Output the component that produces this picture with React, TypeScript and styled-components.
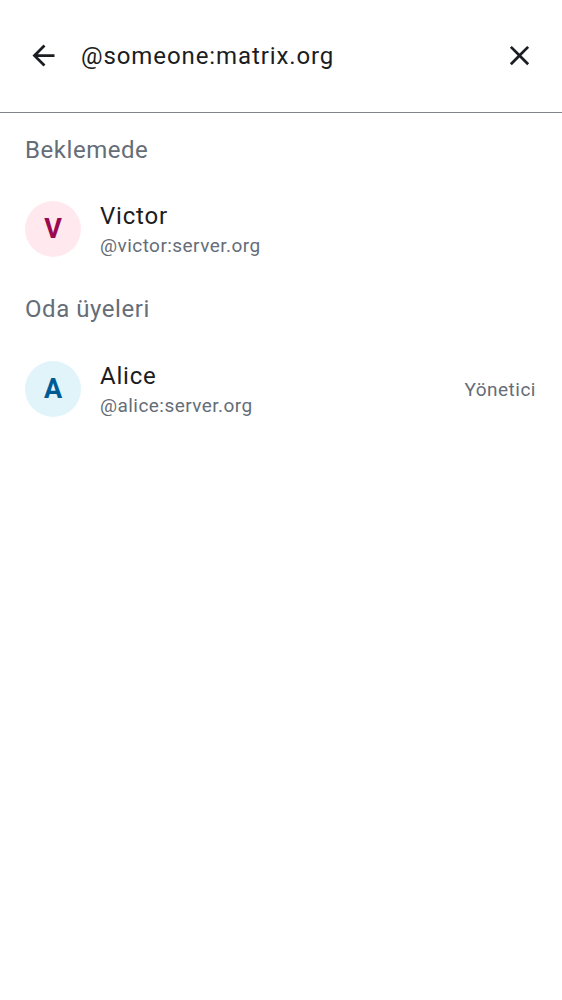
import React from "react";
import styled, { createGlobalStyle } from "styled-components";

const Global = createGlobalStyle`
  html, body { margin: 0; padding: 0; background: #ffffff; }
  body { font-family: Roboto, "Noto Sans", sans-serif; -webkit-font-smoothing: antialiased; }
  * { box-sizing: border-box; }
`;

const Page = styled.div`
  width: 562px;
  min-height: 1000px;
  background: #ffffff;
  display: flex;
  flex-direction: column;
`;

const SearchBar = styled.header`
  height: 113px;
  display: flex;
  align-items: center;
  padding: 0 21px 1px 21px;
  border-bottom: 1px solid #80848a;
`;

const IconButton = styled.button`
  width: 44px;
  height: 44px;
  border: none;
  background: transparent;
  padding: 0;
  display: flex;
  align-items: center;
  justify-content: center;
  color: #1b1d22;
  flex: none;
`;

const Query = styled.div`
  flex: 1;
  margin-left: 16px;
  font-size: 24px;
  color: #1b1d22;
  letter-spacing: 0.9px;
`;

const SectionTitle = styled.div<{ $first?: boolean }>`
  height: ${(p) => (p.$first ? "76px" : "80px")};
  display: flex;
  align-items: center;
  padding: ${(p) => (p.$first ? "0 25px 3px 25px" : "0 25px")};
  font-size: 24px;
  color: #656d77;
  letter-spacing: 0.55px;
`;

const Row = styled.div`
  height: 80px;
  display: flex;
  align-items: center;
  padding: 0 26px 0 25px;
`;

const Avatar = styled.div<{ $bg: string; $fg: string }>`
  width: 56px;
  height: 56px;
  border-radius: 50%;
  background: ${(p) => p.$bg};
  color: ${(p) => p.$fg};
  display: flex;
  align-items: center;
  justify-content: center;
  font-weight: 700;
  font-size: 27px;
  flex: none;
`;

const Texts = styled.div`
  flex: 1;
  margin-left: 19px;
  display: flex;
  flex-direction: column;
`;

const Name = styled.div`
  font-size: 24px;
  line-height: 34px;
  color: #1b1d22;
  letter-spacing: 0.8px;
`;

const UserId = styled.div`
  font-size: 19px;
  line-height: 26px;
  color: #656d77;
  letter-spacing: 0.45px;
`;

const Role = styled.div`
  font-size: 19px;
  color: #656d77;
  letter-spacing: 0.5px;
`;

const BackIcon = () => (
  <svg width="33" height="33" viewBox="0 0 24 24" fill="currentColor">
    <path d="M20 11H7.83l5.59-5.59L12 4l-8 8 8 8 1.41-1.41L7.83 13H20v-2z" />
  </svg>
);

const CloseIcon = () => (
  <svg width="33" height="33" viewBox="0 0 24 24" fill="currentColor">
    <path d="M19 6.41 17.59 5 12 10.59 6.41 5 5 6.41 10.59 12 5 17.59 6.41 19 12 13.41 17.59 19 19 17.59 13.41 12z" />
  </svg>
);

type MemberData = { name: string; id: string; letter: string; bg: string; fg: string; role?: string };

const Member = ({ m }: { m: MemberData }) => (
  <Row>
    <Avatar $bg={m.bg} $fg={m.fg}>{m.letter}</Avatar>
    <Texts>
      <Name>{m.name}</Name>
      <UserId>{m.id}</UserId>
    </Texts>
    {m.role && <Role>{m.role}</Role>}
  </Row>
);

export default function App() {
  return (
    <Page>
      <Global />
      <SearchBar>
        <IconButton aria-label="Geri"><BackIcon /></IconButton>
        <Query>@someone:matrix.org</Query>
        <IconButton aria-label="Temizle"><CloseIcon /></IconButton>
      </SearchBar>
      <SectionTitle $first>Beklemede</SectionTitle>
      <Member m={{ name: "Victor", id: "@victor:server.org", letter: "V", bg: "#ffe9ef", fg: "#9b0a4f" }} />
      <SectionTitle>Oda üyeleri</SectionTitle>
      <Member m={{ name: "Alice", id: "@alice:server.org", letter: "A", bg: "#e1f4f9", fg: "#005a94", role: "Yönetici" }} />
    </Page>
  );
}
